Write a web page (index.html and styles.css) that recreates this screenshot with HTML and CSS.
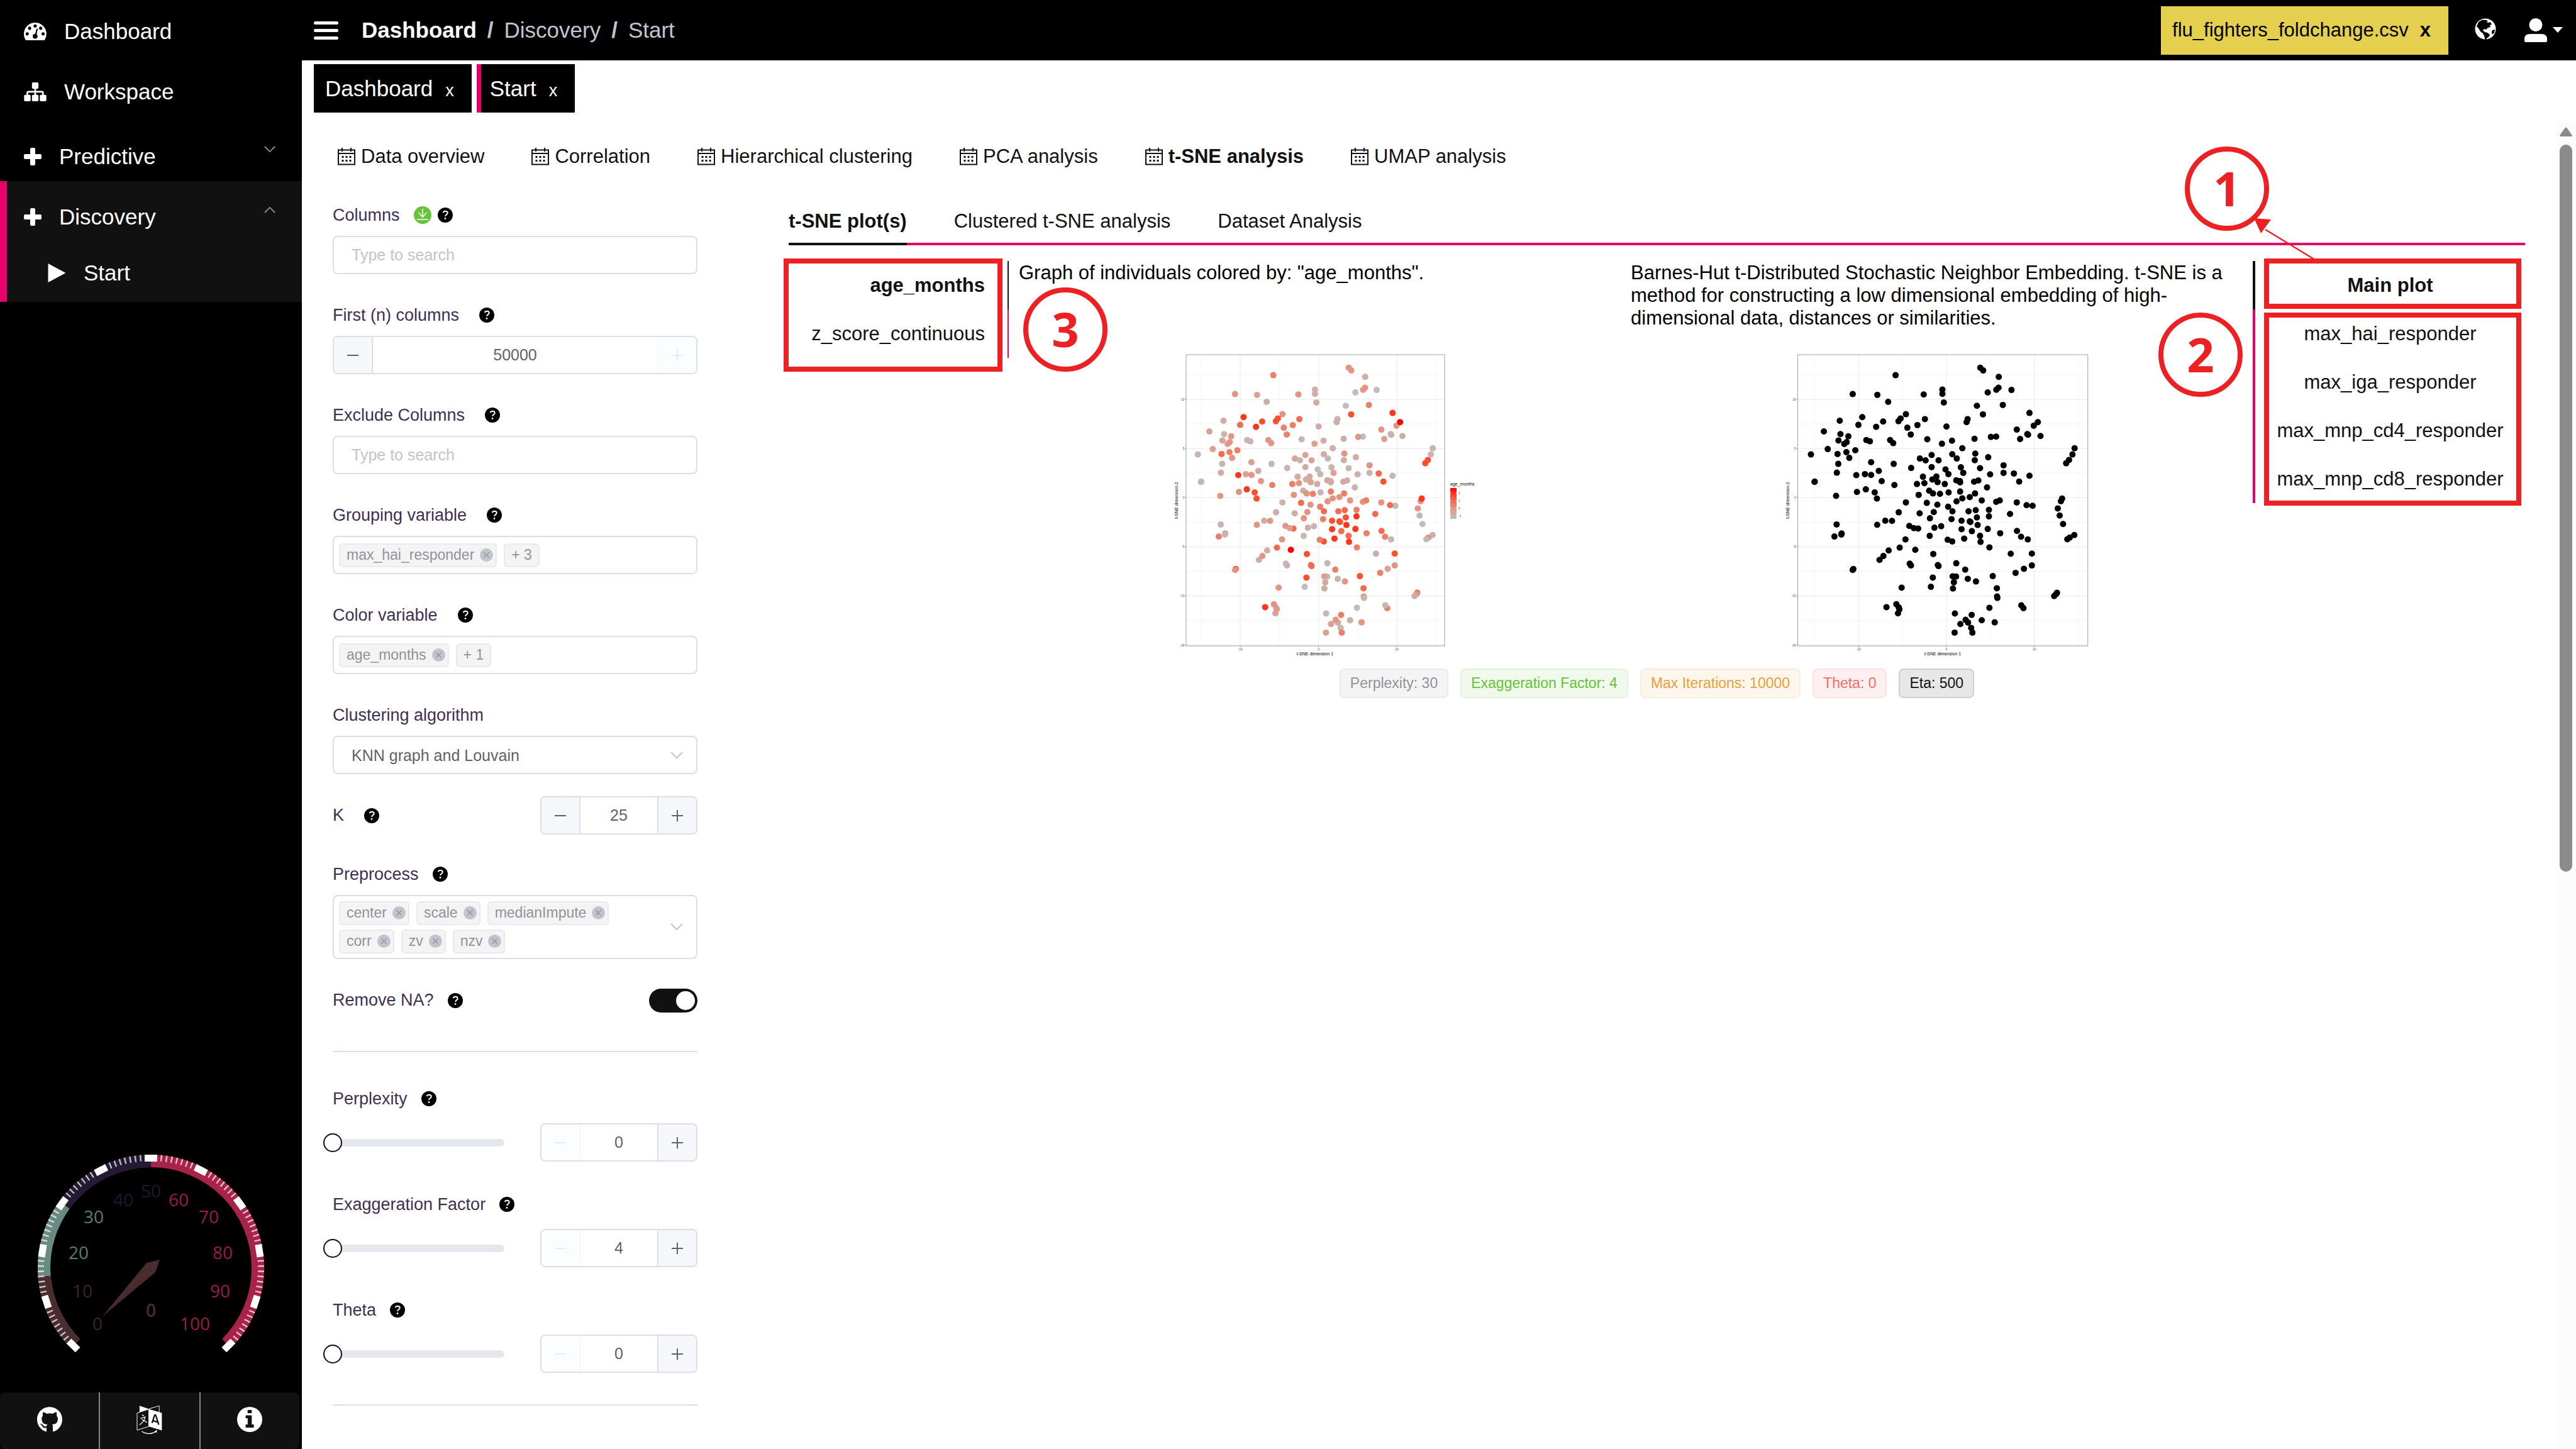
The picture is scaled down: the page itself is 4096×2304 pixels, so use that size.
FILE: index.html
```html
<!DOCTYPE html>
<html lang="en">
<head>
<meta charset="utf-8">
<title>Discovery - Start</title>
<link rel="stylesheet" href="styles.css">
</head>
<body>
<svg class="sprite" aria-hidden="true">
  <symbol id="i-help" viewBox="0 0 24 24">
    <circle cx="12" cy="12" r="12" fill="#000"/>
    <path d="M8.6 8.2C9.2 6.6 10.500 5.800 12.200 5.800C14.200 5.800 15.700 7 15.700 8.800C15.700 11.200 12.300 11.300 12.100 13.800" fill="none" stroke="#fff" stroke-width="2"/>
    <circle cx="12" cy="17.400" r="1.400" fill="#fff"/>
  </symbol>
  <symbol id="i-down" viewBox="0 0 20 12"><path d="M1 1l9 9 9-9" fill="none" stroke="currentColor" stroke-width="2"/></symbol>
  <symbol id="i-up" viewBox="0 0 20 12"><path d="M1 11l9-9 9 9" fill="none" stroke="currentColor" stroke-width="2"/></symbol>
  <symbol id="i-minus" viewBox="0 0 18 18"><path d="M0 9h18" stroke="currentColor" stroke-width="2"/></symbol>
  <symbol id="i-plus" viewBox="0 0 18 18"><path d="M0 9h18M9 0v18" stroke="currentColor" stroke-width="2"/></symbol>
  <symbol id="i-close" viewBox="0 0 22 22">
    <circle cx="11" cy="11" r="11" fill="#c0c4cc"/>
    <path d="M6.500 6.500l9 9M15.500 6.500l-9 9" stroke="#909399" stroke-width="1.300"/>
  </symbol>
  <symbol id="i-cross" viewBox="0 0 28 28"><path d="M12 0h4a2 2 0 0 1 2 2v8h8a2 2 0 0 1 2 2v4a2 2 0 0 1-2 2h-8v8a2 2 0 0 1-2 2h-4a2 2 0 0 1-2-2v-8H2a2 2 0 0 1-2-2v-4a2 2 0 0 1 2-2h8V2a2 2 0 0 1 2-2z" fill="#fff"/></symbol>
  <symbol id="i-cal" viewBox="0 0 28 28">
    <path d="M1 3.500h26v23H1zM1 9h26M7 0v6M21 0v6" fill="none" stroke="#111" stroke-width="2"/>
    <path d="M6.500 13h3v3h-3zM12.500 13h3v3h-3zM18.500 13h3v3h-3zM6.500 19h3v3h-3zM12.500 19h3v3h-3zM18.500 19h3v3h-3z" fill="#111"/>
  </symbol>
</svg>

<div class="app">
  <aside class="sidebar">
    <nav class="menu" aria-label="Main">
      <a class="menu-item" href="#">
        <svg class="menu-icon" viewBox="35 39 198 156"><path d="M52 194.500A98.500 98.500 0 1 1 215 194.500z" fill="#fff"/><g fill="#000"><circle cx="64" cy="138" r="14"/><circle cx="85" cy="89" r="14"/><circle cx="133.500" cy="69" r="14"/><circle cx="182" cy="89" r="14"/><circle cx="203" cy="138" r="14"/><circle cx="133.500" cy="159" r="21"/></g><path d="M150 98l-13 55" stroke="#000" stroke-width="12" stroke-linecap="round"/></svg>
        Dashboard</a>
      <a class="menu-item" href="#">
        <svg class="menu-icon" viewBox="35 567 198 168"><g fill="#fff"><rect x="105" y="567" width="58" height="57" rx="10"/><rect x="35" y="678" width="58" height="57" rx="10"/><rect x="105" y="678" width="58" height="57" rx="10"/><rect x="175" y="678" width="58" height="57" rx="10"/></g><path d="M134 620v60M64 684v-24q0-10 10-10h119q10 0 10 10v24" fill="none" stroke="#fff" stroke-width="15"/></svg>
        Workspace</a>
      <a class="menu-item sub" href="#"><svg class="menu-plus"><use href="#i-cross"/></svg>Predictive<svg class="menu-arrow"><use href="#i-down"/></svg></a>
      <div class="menu-open">
        <a class="menu-item sub" href="#"><svg class="menu-plus"><use href="#i-cross"/></svg>Discovery<svg class="menu-arrow"><use href="#i-up"/></svg></a>
        <a class="menu-item child" href="#"><svg class="menu-play" viewBox="0 0 28 30"><path d="M0 0l28 15L0 30z" fill="#fff"/></svg>Start</a>
      </div>
    </nav>

    <svg class="gauge" viewBox="-200 -190 400 340" role="img" aria-label="Load 0 of 100">
      <g fill="none" stroke-width="20">
        <path d="M-120.200 120.200A170 170 0 1 1 120.200 120.200" stroke="#a8234a"/>
        <path d="M-120.200 120.200A170 170 0 1 1 120.200 120.200" pathLength="100" stroke-dasharray="50 100" stroke="#231b35"/>
        <path d="M-120.200 120.200A170 170 0 1 1 120.200 120.200" pathLength="100" stroke-dasharray="30 100" stroke="#688b83"/>
        <path d="M-120.200 120.200A170 170 0 1 1 120.200 120.200" pathLength="100" stroke-dasharray="15 100" stroke="#4a2c2e"/>
      </g>
      <path d="M-123.700 123.700A175 175 0 1 1 123.700 123.700" fill="none" stroke="#fff" stroke-opacity=".7" stroke-width="10" pathLength="100" stroke-dasharray=".3 .7" stroke-dashoffset=".15"/>
      <g fill="#fff">
        <rect x="-10" y="-180" width="20" height="11" transform="rotate(-135)"/>
        <rect x="-10" y="-180" width="20" height="11" transform="rotate(-108)"/>
        <rect x="-10" y="-180" width="20" height="11" transform="rotate(-81)"/>
        <rect x="-10" y="-180" width="20" height="11" transform="rotate(-54)"/>
        <rect x="-10" y="-180" width="20" height="11" transform="rotate(-27)"/>
        <rect x="-10" y="-180" width="20" height="11"/>
        <rect x="-10" y="-180" width="20" height="11" transform="rotate(27)"/>
        <rect x="-10" y="-180" width="20" height="11" transform="rotate(54)"/>
        <rect x="-10" y="-180" width="20" height="11" transform="rotate(81)"/>
        <rect x="-10" y="-180" width="20" height="11" transform="rotate(108)"/>
        <rect x="-10" y="-180" width="20" height="11" transform="rotate(135)"/>
      </g>
      <path d="M-77 77L-7-8L14-13L7 7z" fill="#4a2c2e"/>
      <g class="gauge-text">
        <g fill="#3d2527"><text x="-85" y="99">0</text><text x="-109" y="47">10</text></g>
        <g fill="#5a7b72"><text x="-115" y="-14">20</text><text x="-91" y="-71">30</text></g>
        <g fill="#1f1830"><text x="-44" y="-98">40</text><text x="0" y="-112">50</text></g>
        <g fill="#981f43"><text x="44" y="-98">60</text><text x="92" y="-71">70</text><text x="114" y="-14">80</text><text x="110" y="47">90</text><text x="70" y="99">100</text></g>
        <text class="gauge-value" x="0" y="78" fill="#4a2c2e">0</text>
      </g>
    </svg>

    <div class="side-foot">
      <a href="#" aria-label="GitHub"><svg width="40" height="40" viewBox="0 4 496 496"><path fill="#fff" d="M165.900 397.400c0 2-2.300 3.600-5.200 3.600-3.300.3-5.600-1.300-5.600-3.600 0-2 2.300-3.600 5.200-3.600 3-.3 5.600 1.300 5.600 3.600zm-31.100-4.500c-.7 2 1.300 4.300 4.300 4.900 2.600 1 5.600 0 6.200-2s-1.300-4.300-4.300-5.200c-2.600-.7-5.500.3-6.200 2.300zm44.200-1.700c-2.900.7-4.900 2.600-4.600 4.900.3 2 2.900 3.300 5.900 2.600 2.900-.7 4.900-2.600 4.600-4.600-.3-1.900-3-3.200-5.900-2.900zM244.800 8C106.100 8 0 113.300 0 252c0 110.900 69.800 205.800 169.500 239.200 12.800 2.300 17.300-5.600 17.300-12.100 0-6.200-.3-40.400-.3-61.400 0 0-70 15-84.700-29.800 0 0-11.400-29.100-27.800-36.600 0 0-22.900-15.700 1.600-15.400 0 0 24.900 2 38.600 25.800 21.900 38.600 58.600 27.500 72.900 20.900 2.300-16 8.800-27.100 16-33.700-55.900-6.200-112.300-14.300-112.300-110.500 0-27.500 7.600-41.300 23.600-58.900-2.600-6.500-11.100-33.300 2.600-67.900 20.900-6.500 69 27 69 27 20-5.600 41.500-8.500 62.800-8.500s42.800 2.900 62.800 8.500c0 0 48.100-33.600 69-27 13.700 34.700 5.200 61.400 2.600 67.900 16 17.700 25.800 31.500 25.800 58.900 0 96.500-58.900 104.200-114.800 110.500 9.200 7.900 17 22.900 17 46.400 0 33.700-.3 75.400-.3 83.600 0 6.500 4.600 14.400 17.300 12.100C428.200 457.800 496 362.900 496 252 496 113.300 383.500 8 244.800 8z"/></svg></a>
      <a href="#" aria-label="Language"><svg width="41" height="47" viewBox="674 1354 126 142"><path d="M689 1357l45 15-45 15z" fill="#fff"/><path d="M734 1372l51-15v32M677 1392l57-18v84l-57 18z" fill="none" stroke="#fff" stroke-width="3"/><path d="M734 1373l64 19v85l-64-19z" fill="#fff"/><path d="M750 1441l13-39h5l15 47M755 1430l22 6" fill="none" stroke="#111" stroke-width="7"/><path d="M701 1401l10 5M693 1419l24-8q-7 27-28 38M700 1424q12 5 26 15" fill="none" stroke="#fff" stroke-width="4"/><path d="M700 1482q33 22 68 1" fill="none" stroke="#fff" stroke-width="4"/><path d="M763 1480l12-5-3 15z" fill="#fff"/></svg></a>
      <a href="#" aria-label="Information"><svg width="40" height="40" viewBox="0 0 40 40"><circle cx="20" cy="20" r="20" fill="#fff"/><path d="M16.700 5h6.600v5h-6.600zM13.600 13.500h9.700V28h3.200v5H13.600v-5h3.200V18h-3.200z" fill="#111"/></svg></a>
    </div>
  </aside>

  <div class="main">
    <header class="topbar">
      <button class="burger" aria-label="Toggle menu"><span></span><span></span><span></span></button>
      <nav class="crumbs" aria-label="Breadcrumb"><a class="home" href="#">Dashboard</a><b>/</b><a href="#">Discovery</a><b>/</b><span>Start</span></nav>
      <button class="file">flu_fighters_foldchange.csv<b>x</b></button>
      <a class="globe" href="#" aria-label="Public"><svg width="34" height="34" viewBox="0 0 34 34"><circle cx="17" cy="17" r="16.500" fill="#fff"/><path d="M6 6l6-3.500 7 .5 2 2-3 1 4 1 3-1 2 4-3 1 1 3-4 1-3 3-3-1-2 2 3 3 4 1 4 3-1 3-4 3-1 3h-1l-2-7-2-4-4-3-3-5-3-3z" fill="#000"/><path d="M28 19l4-1-1 5-3 3-1-4zM14 6l3 1-2 2z" fill="#000"/></svg></a>
      <button class="user" aria-label="Account"><svg width="36" height="38" viewBox="0 0 36 38"><circle cx="18" cy="10.500" r="10.500" fill="#fff"/><path d="M0 36v-3q0-8 9-8h18q9 0 9 8v3q0 2-2 2H2q-2 0-2-2z" fill="#fff"/></svg><svg width="16" height="10" viewBox="0 0 16 10"><path d="M0 0h16L8 9z" fill="#fff"/></svg></button>
    </header>

    <div class="open-tabs">
      <a href="#">Dashboard<small>x</small></a>
      <a class="current" href="#">Start<small>x</small></a>
    </div>

    <div class="page">
      <div class="content">
        <nav class="tools" aria-label="Analyses">
          <a href="#"><svg><use href="#i-cal"/></svg>Data overview</a>
          <a href="#"><svg><use href="#i-cal"/></svg>Correlation</a>
          <a href="#"><svg><use href="#i-cal"/></svg>Hierarchical clustering</a>
          <a href="#"><svg><use href="#i-cal"/></svg>PCA analysis</a>
          <a class="current" href="#"><svg><use href="#i-cal"/></svg>t-SNE analysis</a>
          <a href="#"><svg><use href="#i-cal"/></svg>UMAP analysis</a>
        </nav>

        <div class="work">
          <form class="settings">
            <div class="field">
              <div class="label near"><label for="cols">Columns</label><span class="pair"><svg class="get" viewBox="0 0 28 28"><circle cx="14" cy="14" r="14" fill="#67c23a"/><path d="M14 4v12M7.500 10l6.500 7 6.500-7M5 21h18" fill="none" stroke="#fff" stroke-width="1.600"/></svg><svg class="help"><use href="#i-help"/></svg></span></div>
              <input class="box" id="cols" type="text" placeholder="Type to search">
            </div>
            <div class="field">
              <div class="label"><label for="firstn">First (n) columns</label><svg class="help"><use href="#i-help"/></svg></div>
              <div class="number wide"><button type="button" aria-label="Decrease"><svg><use href="#i-minus"/></svg></button><input id="firstn" type="text" value="50000"><button type="button" aria-label="Increase" disabled><svg><use href="#i-plus"/></svg></button></div>
            </div>
            <div class="field">
              <div class="label"><label for="excl">Exclude Columns</label><svg class="help"><use href="#i-help"/></svg></div>
              <input class="box" id="excl" type="text" placeholder="Type to search">
            </div>
            <div class="field">
              <div class="label"><span id="l-group">Grouping variable</span><svg class="help"><use href="#i-help"/></svg></div>
              <div class="box tags" role="group" aria-labelledby="l-group"><span class="tag">max_hai_responder<button type="button" aria-label="Remove"><svg><use href="#i-close"/></svg></button></span><span class="tag">+ 3</span></div>
            </div>
            <div class="field">
              <div class="label"><span id="l-color">Color variable</span><svg class="help"><use href="#i-help"/></svg></div>
              <div class="box tags" role="group" aria-labelledby="l-color"><span class="tag">age_months<button type="button" aria-label="Remove"><svg><use href="#i-close"/></svg></button></span><span class="tag">+ 1</span></div>
            </div>
            <div class="field">
              <div class="label"><label for="algo">Clustering algorithm</label></div>
              <div class="choice"><select class="box" id="algo"><option>KNN graph and Louvain</option></select><svg class="drop"><use href="#i-down"/></svg></div>
            </div>
            <div class="line">
              <div class="label"><label for="k">K</label><svg class="help"><use href="#i-help"/></svg></div>
              <div class="number"><button type="button" aria-label="Decrease"><svg><use href="#i-minus"/></svg></button><input id="k" type="text" value="25"><button type="button" aria-label="Increase"><svg><use href="#i-plus"/></svg></button></div>
            </div>
            <div class="field">
              <div class="label near"><span id="l-pre">Preprocess</span><svg class="help"><use href="#i-help"/></svg></div>
              <div class="choice">
                <div class="box tags multi" role="group" aria-labelledby="l-pre">
                  <span class="tag">center<button type="button" aria-label="Remove"><svg><use href="#i-close"/></svg></button></span><span class="tag">scale<button type="button" aria-label="Remove"><svg><use href="#i-close"/></svg></button></span><span class="tag">medianImpute<button type="button" aria-label="Remove"><svg><use href="#i-close"/></svg></button></span><span class="tag">corr<button type="button" aria-label="Remove"><svg><use href="#i-close"/></svg></button></span><span class="tag">zv<button type="button" aria-label="Remove"><svg><use href="#i-close"/></svg></button></span><span class="tag">nzv<button type="button" aria-label="Remove"><svg><use href="#i-close"/></svg></button></span>
                </div><svg class="drop"><use href="#i-down"/></svg>
              </div>
            </div>
            <div class="line">
              <div class="label near"><label for="na">Remove NA?</label><svg class="help"><use href="#i-help"/></svg></div>
              <input class="switch" id="na" type="checkbox" checked>
            </div>
            <hr>
            <div class="field slide">
              <div class="label near"><label for="perp">Perplexity</label><svg class="help"><use href="#i-help"/></svg></div>
              <div class="row"><input type="range" min="0" max="100" value="0" aria-label="Perplexity slider"><div class="number"><button type="button" aria-label="Decrease" disabled><svg><use href="#i-minus"/></svg></button><input id="perp" type="text" value="0"><button type="button" aria-label="Increase"><svg><use href="#i-plus"/></svg></button></div></div>
            </div>
            <div class="field slide">
              <div class="label near"><label for="exag">Exaggeration Factor</label><svg class="help"><use href="#i-help"/></svg></div>
              <div class="row"><input type="range" min="4" max="100" value="4" aria-label="Exaggeration slider"><div class="number"><button type="button" aria-label="Decrease" disabled><svg><use href="#i-minus"/></svg></button><input id="exag" type="text" value="4"><button type="button" aria-label="Increase"><svg><use href="#i-plus"/></svg></button></div></div>
            </div>
            <div class="field slide">
              <div class="label near"><label for="theta">Theta</label><svg class="help"><use href="#i-help"/></svg></div>
              <div class="row"><input type="range" min="0" max="100" value="0" aria-label="Theta slider"><div class="number"><button type="button" aria-label="Decrease" disabled><svg><use href="#i-minus"/></svg></button><input id="theta" type="text" value="0"><button type="button" aria-label="Increase"><svg><use href="#i-plus"/></svg></button></div></div>
            </div>
            <hr>
          </form>

          <section class="results">
            <nav class="views" aria-label="Views">
              <a class="current" href="#">t-SNE plot(s)</a><a href="#">Clustered t-SNE analysis</a><a href="#">Dataset Analysis</a>
            </nav>
            <div class="panel">
              <nav class="pick left" aria-label="Color by">
                <a class="current" href="#">age_months</a><a href="#">z_score_continuous</a>
                <span class="frame frame-colors"></span><span class="mark mark-3">3</span>
              </nav>
              <div class="plots">
                <p>Graph of individuals colored by: "age_months".</p>
                <p>Barnes-Hut t-Distributed Stochastic Neighbor Embedding. t-SNE is a method for constructing a low dimensional embedding of high-dimensional data, distances or similarities.</p>
                <svg class="plot" id="plot-color" viewBox="0 0 484 484" role="img" aria-label="t-SNE colored by age_months"></svg>
                <svg class="plot" id="plot-main" viewBox="0 0 484 484" role="img" aria-label="t-SNE main plot"></svg>
              </div>
              <nav class="pick right" aria-label="Plot">
                <a class="current" href="#">Main plot</a><a href="#">max_hai_responder</a><a href="#">max_iga_responder</a><a href="#">max_mnp_cd4_responder</a><a href="#">max_mnp_cd8_responder</a>
                <span class="frame frame-main"></span><span class="frame frame-groups"></span>
                <span class="mark mark-1">1</span><span class="mark mark-2">2</span>
                <svg class="arrow" viewBox="0 0 100 70"><path d="M97 66L18 18" stroke="#ed2024" stroke-width="2.400"/><path d="M0 0l27 2-16 22z" fill="#ed2024"/></svg>
              </nav>
            </div>
            <div class="params">
              <span class="info">Perplexity: 30</span><span class="success">Exaggeration Factor: 4</span><span class="warning">Max Iterations: 10000</span><span class="danger">Theta: 0</span><span class="dark">Eta: 500</span>
            </div>
          </section>
        </div>
      </div>
      <div class="scroll"><svg width="20" height="16" viewBox="0 0 20 16"><path d="M2 15q-3 0-1-3L8 2q2-3 4 0l7 10q2 3-1 3z" fill="#8b8b8b"/></svg><span></span></div>
    </div>
  </div>
</div>
<script src="plots.js"></script>
</body>
</html>
```
FILE: styles.css
```css
* { box-sizing: border-box; }
body { margin: 0; font-family: "Liberation Sans", Arial, sans-serif; font-size: 31px; color: #000; background: #fff; }
a { color: inherit; text-decoration: none; }
button { margin: 0; padding: 0; border: 0; background: none; font: inherit; color: inherit; }
input, select { margin: 0; font: inherit; color: inherit; }
svg { display: block; flex: none; }
p { margin: 0; }
.sprite { display: none; }

.app { display: grid; grid-template-columns: 480px 1fr; min-height: 100vh; }

/* sidebar */
.sidebar { display: flex; flex-direction: column; background: #000; color: #fff; font-size: 35px; }
.menu-item { display: flex; align-items: center; gap: 28px; height: 96px; padding-left: 38px; padding-top: 4px; }
.menu-item.sub { padding-top: 18px; gap: 28px; }
.menu-item.child { padding-left: 76px; }
.menu-open { background: #111; box-shadow: inset 11px 0 #e5006d; }
.menu-icon { width: 36px; height: 30px; }
.menu-plus { width: 28px; height: 28px; }
.menu-play { width: 29px; height: 30px; }
.menu-arrow { width: 18px; height: 11px; margin: 22px 42px 0 auto; align-self: flex-start; color: #909399; }
.gauge { width: 400px; height: 340px; margin: auto 40px 48px; }
.gauge-text { font-family: "Open Sans", sans-serif; font-size: 28px; text-anchor: middle; }
.gauge-value { font-weight: 600; }
.side-foot { display: flex; width: 476px; height: 90px; background: #111; border-radius: 8px; }
.side-foot a { flex: 1; display: flex; align-items: center; justify-content: center; padding-bottom: 4px; }
.side-foot a + a { border-left: 2px solid #888; }

/* top bar */
.main { display: flex; flex-direction: column; }
.topbar { display: flex; align-items: center; height: 96px; padding: 0 21px 0 19px; background: #000; color: #fff; }
.burger { display: flex; flex-direction: column; gap: 7px; width: 39px; }
.burger span { height: 5px; border-radius: 3px; background: #fff; }
.crumbs { display: flex; gap: 17px; margin-left: 37px; margin-right: auto; font-size: 35px; color: #c0c4cc; }
.crumbs .home { color: #fff; font-weight: bold; }
.file { display: flex; gap: 18px; align-items: center; height: 77px; padding: 0 28px 0 18px; background: #e4cf4e; color: #000; }
.globe { margin: 0 45px 4px 42px; }
.user { display: flex; align-items: center; gap: 9px; }

.open-tabs { display: flex; gap: 8px; height: 96px; padding: 6px 19px 13px; font-size: 35px; color: #fff; }
.open-tabs a { display: flex; align-items: baseline; gap: 20px; padding: 19px 28px 0 18px; background: #000; }
.open-tabs .current { padding-left: 14px; border-left: 7px solid #e5006d; }
.open-tabs small { font-size: 27px; }

/* page */
.page { flex: 1; display: flex; }
.content { flex: 1; padding: 0 49px; }
.scroll { display: flex; flex-direction: column; align-items: center; width: 32px; padding-top: 10px; background: #fcfcfc; }
.scroll span { flex: none; width: 20px; height: 55%; margin-top: 12px; border-radius: 10px; background: #8b8b8b; }
.tools { display: flex; gap: 75px; height: 110px; padding: 3px 0 0 8px; align-items: center; color: #111; }
.tools a { display: flex; align-items: center; gap: 9px; }
.tools svg { width: 28px; height: 28px; }
.current { font-weight: bold; }
.open-tabs .current { font-weight: normal; }
.work { display: grid; grid-template-columns: 580px 1fr; column-gap: 145px; }

/* settings form */
.settings { padding-top: 7px; font-size: 25px; color: #606266; }
.field { margin-bottom: 32px; }
.label { display: flex; align-items: center; gap: 32px; height: 66px; font-size: 27px; color: #412f55; }
.label.near { gap: 22px; }
.pair { display: flex; gap: 10px; align-items: center; }
.get { width: 28px; height: 28px; }
.help { width: 24px; height: 24px; }
.box { display: block; width: 100%; height: 61px; padding: 0 28px; border: 2px solid #dcdfe6; border-radius: 8px; background: #fff; appearance: none; }
.box::placeholder { color: #c0c4cc; opacity: 1; }
.tags { display: flex; flex-wrap: wrap; align-content: center; gap: 7px 11px; padding: 0 8px; }
.multi { height: 102px; padding-right: 100px; }
.tag { display: flex; align-items: center; gap: 9px; height: 38px; padding: 0 10px; border: 2px solid #e9e9eb; border-radius: 6px; background: #f4f4f5; color: #909399; font-size: 23px; }
.tag button { margin-right: -6px; }
.tag svg { width: 21px; height: 21px; }
.choice { display: grid; align-items: center; }
.choice > * { grid-area: 1 / 1; }
.drop { width: 20px; height: 12px; justify-self: end; margin-right: 23px; color: #c0c4cc; pointer-events: none; }
.line { display: flex; justify-content: space-between; align-items: center; height: 61px; margin: 35px 0 30px; }
.number { display: flex; width: 250px; height: 61px; border: 2px solid #dcdfe6; border-radius: 8px; overflow: hidden; }
.number.wide { width: 100%; }
.number input { flex: 1; min-width: 0; padding: 0; border: 0; text-align: center; }
.number button { display: flex; align-items: center; justify-content: center; width: 62px; background: #f5f7fa; border-right: 2px solid #dcdfe6; }
.number input + button { border-right: 0; border-left: 2px solid #dcdfe6; }
.number button:disabled { background: #fcfdfe; border-color: #f5f7fa; color: #e9ebf0; }
.number svg { width: 18px; height: 18px; }
.switch { appearance: none; display: flex; align-items: center; justify-content: flex-end; width: 77px; height: 38px; padding: 4px; border-radius: 19px; background: #111; }
.switch::before { content: ""; width: 30px; height: 30px; border-radius: 50%; background: #fff; }
hr { height: 2px; margin: 50px 0 41px; border: 0; background: #dcdfe6; }
.slide { margin-bottom: 35px; }
.row { display: flex; justify-content: space-between; align-items: center; padding-top: 6px; }
.row input[type=range] { appearance: none; width: 288px; height: 30px; margin-left: -15px; background: none; }
.row input[type=range]::-webkit-slider-runnable-track { height: 12px; border-radius: 6px; background: #e4e7ed; }
.row input[type=range]::-webkit-slider-thumb { appearance: none; width: 30px; height: 30px; margin-top: -9px; border: 2px solid #111; border-radius: 50%; background: #fff; }

/* results */
.results { padding-top: 12px; }
.views { display: flex; gap: 75px; height: 76px; border-bottom: 4px solid #e5006d; color: #111; line-height: 75px; }
.views .current { height: 76px; border-bottom: 4px solid #111; }
.panel { display: grid; grid-template-columns: 350px 1fr 433px; align-items: start; padding-top: 25px; }
.pick { position: relative; display: flex; flex-direction: column; color: #111; }
.pick a { height: 77px; line-height: 78px; }
.left a { padding-right: 36px; text-align: right; border-right: 2px solid #e5006d; }
.right a { text-align: center; border-left: 4px solid #e5006d; }
.pick .current { border-color: #111; }
.plots { display: grid; grid-template-columns: 1fr 1fr; padding: 0 16px; row-gap: 38px; padding-top: 1px; line-height: 36px; }
.plot { width: 484px; height: 484px; margin: 0 auto; }
.plot text { fill: #4d4d4d; font-size: 5px; }
.plot .title { fill: #000; font-size: 7px; }
.params { display: flex; justify-content: center; gap: 19px; margin-top: 17px; font-size: 23px; line-height: 43px; }
.params span { padding: 0 15px; border: 2px solid; border-radius: 8px; }
.params .info { color: #909399; background: #f4f4f5; border-color: #e9e9eb; }
.params .success { color: #67c23a; background: #f0f9eb; border-color: #e1f3d8; }
.params .warning { color: #e6a23c; background: #fdf6ec; border-color: #faecd8; }
.params .danger { color: #f56c6c; background: #fef0f0; border-color: #fde2e2; }
.params .dark { color: #111; background: #e7e7e7; border-color: #cfcfcf; }

/* tour marks laid over the pickers */
.frame { position: absolute; border: 8px solid #ed2024; pointer-events: none; }
.frame-colors { left: -8px; right: 10px; top: -4px; height: 180px; }
.frame-main { left: 18px; right: 6px; top: -4px; height: 80px; }
.frame-groups { left: 18px; right: 6px; top: 82px; height: 307px; }
.mark { position: absolute; width: 134px; height: 134px; border: 8px solid #ed2024; border-radius: 50%; color: #ed2024; font: bold 76px/116px "Open Sans", sans-serif; text-align: center; }
.mark-3 { left: 373px; top: 42px; }
.mark-1 { left: -108px; top: -182px; }
.mark-2 { left: -150px; top: 82px; }
.arrow { position: absolute; left: 2px; top: -68px; width: 100px; height: 70px; }
```
FILE: plots.js
```javascript
// Each point: x, y on the panel grid, and a colour step from low (0) to high (9).
const points = `908,139,4 896,126,4 973,170,2 543,162,5 972,223,4 963,233,4 1026,234,0 927,246,0 738,232,1 738,253,2 660,256,4 744,295,2
364,254,4 467,258,3 512,292,2 882,311,0 990,307,5 907,353,7 1101,346,8 1119,408,4 1136,391,9 843,376,1 839,391,2 404,366,8 388,404,6
310,384,2 462,414,8 491,388,7 586,352,4 555,386,7 564,373,7 665,376,6 634,405,5 592,418,5 606,451,5 755,412,2 244,436,3 313,449,1
346,460,4 305,480,3 329,497,3 339,488,4 421,478,1 436,484,1 260,522,3 301,546,6 338,537,5 375,528,5 350,565,4 190,548,1 304,594,1
441,586,3 298,637,2 206,680,1 205,682,1 520,478,4 533,493,4 535,594,1 608,614,1 675,474,1 736,496,3 778,481,2 821,518,2 872,472,2
962,461,0 940,463,4 1048,427,4 1095,452,3 1092,449,1 1062,473,3 1147,458,2 1289,518,1 1280,548,1 1266,575,7 1254,591,7 693,551,3
644,568,3 668,577,1 722,577,3 693,610,2 779,547,2 798,568,1 875,544,4 873,576,2 929,562,2 815,611,1 895,615,1 751,621,0 763,644,1
825,638,3 937,645,2 993,601,4 993,638,1 1036,641,6 1058,680,7 1101,652,1 473,628,2 415,644,3 441,648,4 379,649,8 485,678,4 538,697,5
382,731,4 419,718,8 456,733,7 465,763,7 295,750,4 657,657,2 663,688,4 632,692,5 713,656,2 696,670,2 718,683,3 748,692,2 796,674,3
811,678,2 812,684,2 870,681,2 888,675,2 924,709,1 683,725,2 699,738,4 728,740,5 639,745,4 764,733,1 812,729,5 874,738,5 821,762,4
852,756,4 797,777,4 902,772,4 962,779,4 977,772,5 1048,782,4 1114,798,1 1089,795,6 1020,838,6 673,784,6 717,793,4 762,803,5 780,825,6
702,829,4 586,782,1 643,835,2 556,830,2 686,859,4 776,863,5 847,825,6 877,820,6 932,818,5 932,850,8 882,855,7 818,871,7 852,874,7
855,877,7 885,892,8 818,912,8 861,922,6 927,911,8 895,945,6 897,974,8 829,958,8 779,972,7 760,964,5 979,932,5 1049,921,6 1066,949,5
1094,962,1 934,1001,5 500,871,2 528,872,4 466,891,4 600,896,4 637,909,6 619,907,3 705,905,2 733,898,1 685,945,1 584,962,4 297,889,1
318,933,4 317,938,1 288,948,5 560,1002,6 625,1013,9 514,1016,2 476,1062,2 492,1043,4 700,1033,7 602,1080,1 607,1089,1 719,1087,6
722,1092,6 796,1078,1 833,1109,5 367,1106,7 364,1111,4 698,1148,7 690,1193,0 568,1197,4 795,1143,1 781,1142,3 786,1171,2 782,1201,2
844,1154,1 878,1167,4 948,1141,7 965,1200,6 966,1240,4 967,1247,1 1023,1032,2 1111,1031,7 1111,1089,4 1078,1105,3 1043,1125,5
1216,1222,6 1212,1229,4 1204,1238,2 1232,776,4 1237,763,8 1219,811,4 1227,846,1 1241,887,0 1288,941,1 1269,953,4 1259,961,1
505,1292,8 556,1293,1 546,1278,4 559,1302,4 553,1322,3 790,1323,1 860,1330,5 845,1367,2 835,1354,4 813,1374,3 858,1393,1 863,1416,5
789,1416,3 902,1356,2 956,1366,4 934,1295,0 1076,1297,5 1067,1283,1`.trim().split(/\s+/).map(p => p.split(',').map(Number));

const ramp = ['#bebebe', '#c6b5b3', '#cfaca6', '#d9a295', '#e39482', '#eb8069', '#f26a50', '#f9502f', '#ff361c', '#ff0000'];

function draw(id, left, right, zero, unit, titleX, colored) {
  const top = 2, bottom = 465;
  const px = v => zero + v * unit;
  const py = g => g * 0.3264 - 18.3;
  let s = '';
  const line = (x1, y1, x2, y2, c, w) => { s += `<path d="M${x1} ${y1}L${x2} ${y2}" stroke="${c}" stroke-width="${w}"/>`; };
  for (const v of [-15, -5, 5, 15]) line(px(v), top, px(v), bottom, '#f3f3f3', 0.6);
  for (const v of [12.5, 7.5, 2.5, -2.5, -7.5, -12.5]) line(left, py(758.5 - v * 47.85), right, py(758.5 - v * 47.85), '#ededed', 0.6);
  for (const v of [-10, 0, 10]) {
    line(px(v), top, px(v), bottom, '#e6e6e6', 0.9);
    line(px(v), bottom, px(v), bottom + 1.5, '#333', 0.6);
    s += `<text x="${px(v)}" y="472" text-anchor="middle">${v}</text>`;
  }
  for (const v of [10, 5, 0, -5, -10, -15]) {
    const y = py(758.5 - v * 47.85);
    line(left, y, right, y, '#e6e6e6', 0.9);
    line(left - 1.5, y, left, y, '#333', 0.6);
    s += `<text x="${left - 2.5}" y="${y + 2}" text-anchor="end">${v}</text>`;
  }
  for (const [gx, gy, c] of points) {
    s += `<circle cx="${(zero + (gx - 755) / 36.65 * unit).toFixed(1)}" cy="${py(gy).toFixed(1)}" r="5" fill="${colored ? ramp[c] : '#000'}"/>`;
  }
  s += `<rect x="${left}" y="${top}" width="${right - left}" height="${bottom - top}" fill="none" stroke="#8a8a8a" stroke-width="0.8"/>`;
  s += `<text class="title" x="${titleX}" y="480" text-anchor="middle">t-SNE dimension 1</text>`;
  s += `<text class="title" transform="translate(${left - 13} 233.500) rotate(-90)" text-anchor="middle">t-SNE dimension 2</text>`;
  if (colored) {
    s += '<defs><linearGradient id="ramp" x1="0" y1="0" x2="0" y2="1"><stop offset="0" stop-color="#ff0000"/><stop offset=".3" stop-color="#f9553a"/><stop offset=".65" stop-color="#e39482"/><stop offset="1" stop-color="#bebebe"/></linearGradient></defs>';
    s += '<text class="title" x="441" y="210">age_months</text><rect x="441" y="214" width="10" height="49" fill="url(#ramp)"/>';
    [[2, 222.200], [1, 234.200], [0, 246.300], [-1, 258.300]].forEach(([v, y]) => {
      line(441, y, 443, y, '#fff', 0.5);
      line(449, y, 451, y, '#fff', 0.5);
      s += `<text x="454" y="${y + 2}">${v}</text>`;
    });
  }
  document.getElementById(id).innerHTML = s;
}

draw('plot-color', 21, 432, 231.7, 12.46, 226, true);
draw('plot-main', 20.400, 481.800, 257, 13.98, 251, false);
```
